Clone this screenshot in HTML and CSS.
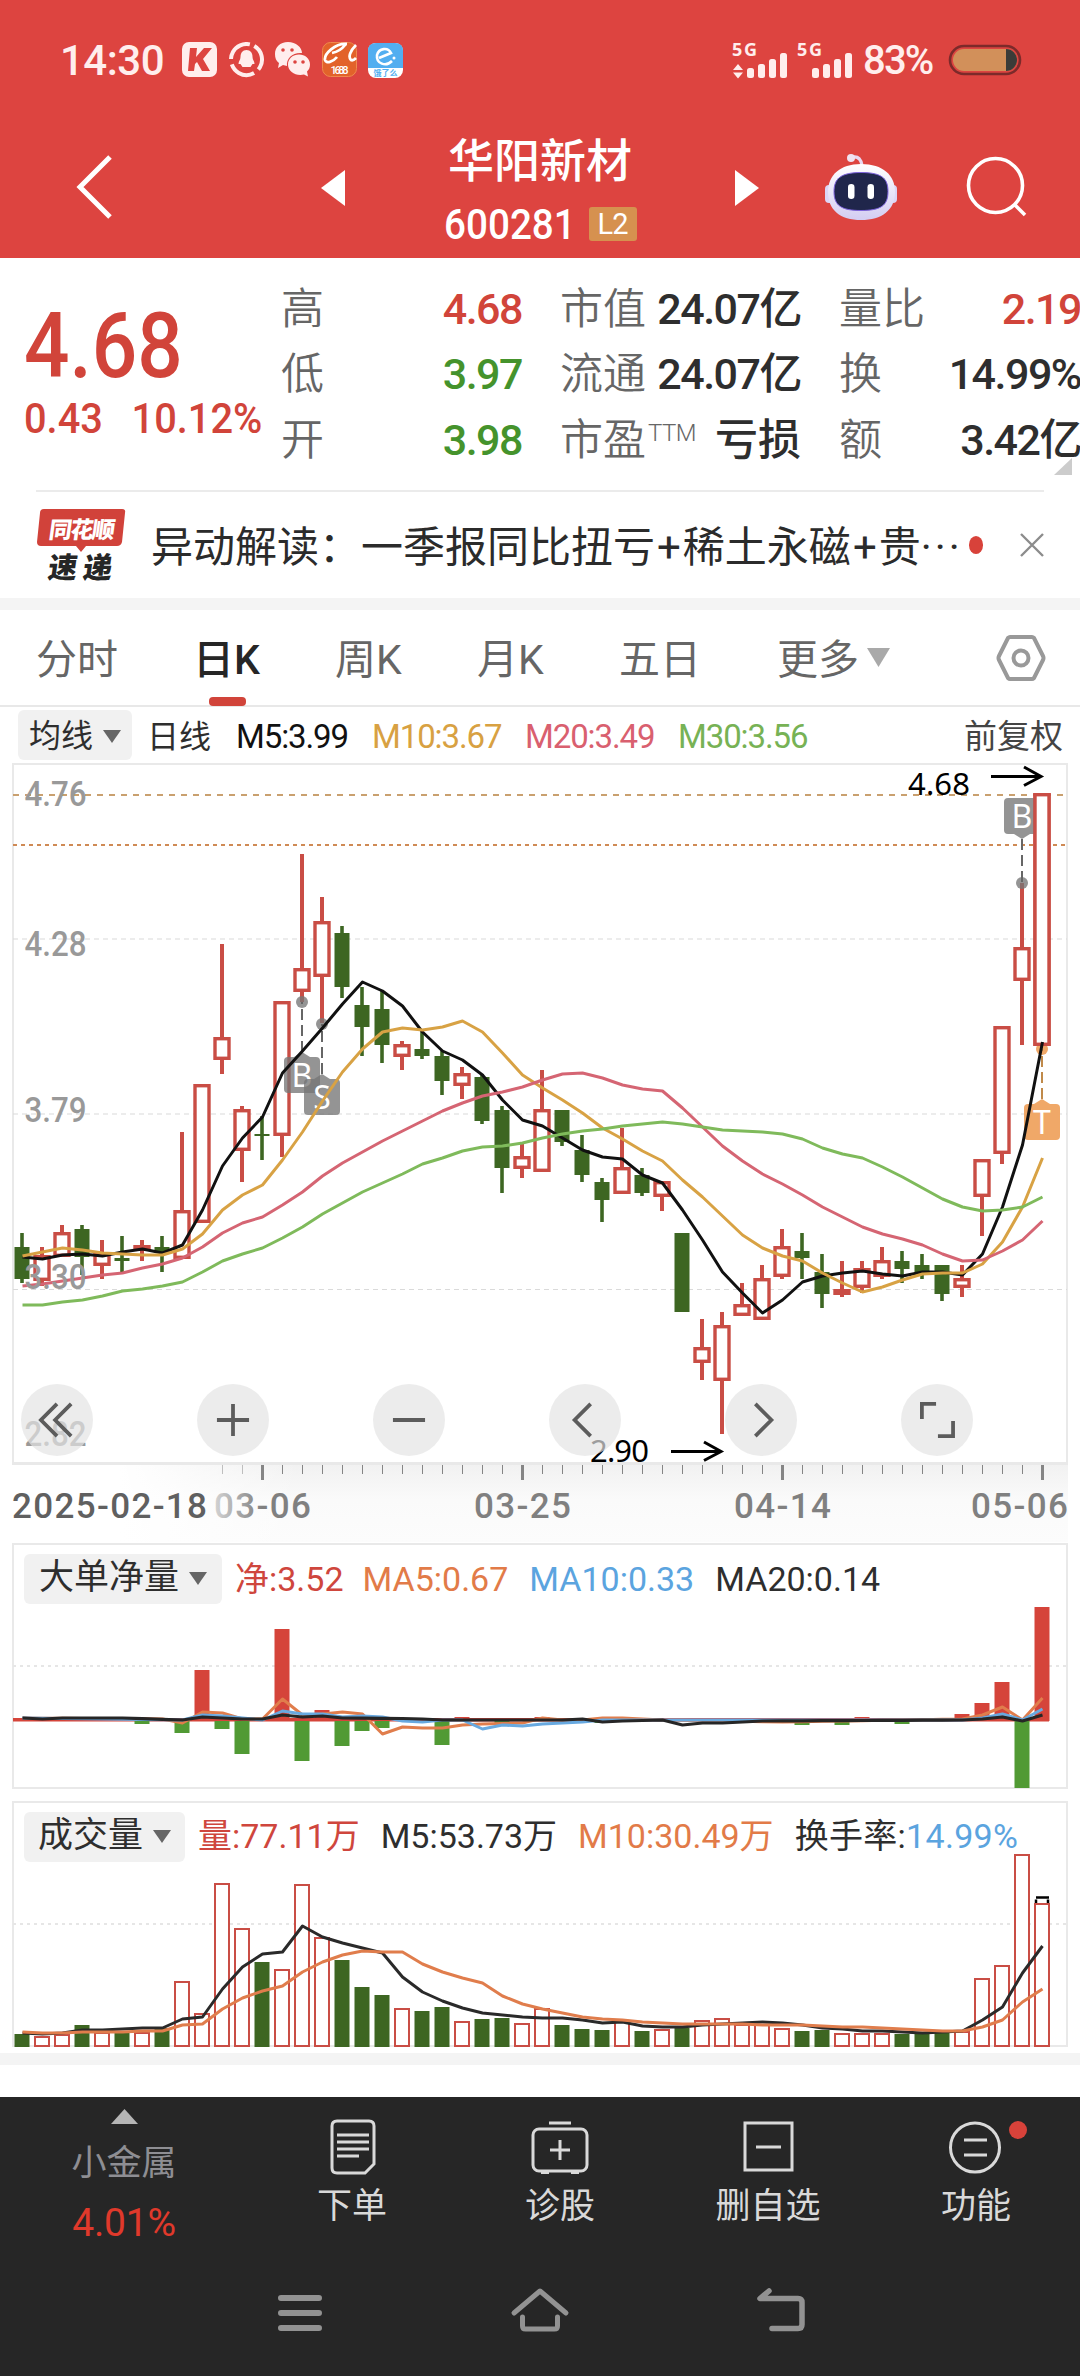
FILE: index.html
```html
<!DOCTYPE html>
<html lang="zh-CN">
<head>
<meta charset="utf-8">
<title>华阳新材 600281</title>
<link rel="stylesheet" href="styles.css">
</head>
<body>
<header class="top">
  <div class="status">
    <span class="clock">14:30</span>
    <svg class="apps" width="188" height="36" viewBox="180 42 188 36">
      <rect x="181" y="42" width="35" height="35" rx="7" fill="#ffeeed"/>
      <path d="M189 48h7l-1 9 8-9h8l-9 11 7 12h-8l-5-9-2 2-1 7h-6z" fill="#dd4440"/>
      <circle cx="245.500" cy="59.500" r="15.500" fill="none" stroke="#ffeeed" stroke-width="4" stroke-dasharray="27 5.500" transform="rotate(-60 245.500 59.500)"/>
      <path d="M245.500 50c4 0 6 3 6 7 0 3 2 4 2 7l-2 0-2 3h-8l-2-3-2 0c0-3 2-4 2-7 0-4 2-7 6-7z" fill="#ffeeed"/>
      <path d="M287 42c8 0 14 5.500 14 11-9-1-16 5-15 13l-4-1-5 3 1-5c-3-2-4-5-4-9 0-7 5-12 13-12z" fill="#ffeeed"/>
      <path d="M298 54.500c6 0 11 4 11 10 0 3-1 5-3 7l1 5-4-2c-8 2-16-3-16-10 0-6 5-10 11-10z" fill="#ffeeed"/>
      <g fill="#dd4440"><circle cx="282" cy="50" r="1.800"/><circle cx="291" cy="50" r="1.800"/><circle cx="294" cy="62" r="1.800"/><circle cx="302" cy="62" r="1.800"/></g>
      <rect x="321.500" y="42.500" width="34" height="34" rx="8" fill="#e2622a" stroke="#ef8a4e"/>
      <path d="M346 44c-12-1-23 10-22 16 1 4 8 2 12-3M331 53c5-1 10-4 13-8M355 45c-6 6-8 12-5 15q2 1 5-2" fill="none" stroke="#fff" stroke-width="2.800"/>
      <text class="tiny" x="338.500" y="74" textLength="18" text-anchor="middle" fill="#fff">1688</text>
    </svg>
    <svg class="ele" width="35" height="35" viewBox="368 42 35 35">
      <rect x="368" y="42" width="35" height="35" rx="8" fill="#fff"/>
      <path d="M368 67V50q0-8 8-8h19q8 0 8 8v17z" fill="#52aef0"/>
      <path d="M379 57l12-5c-3-6-12-5-14 2-1 9 9 12 15 6" fill="none" stroke="#fff" stroke-width="2.600"/>
      <circle cx="394" cy="57" r="1.500" fill="#fff"/>
      <text class="micro" x="385.500" y="75" text-anchor="middle" fill="#52aef0">饿了么</text>
    </svg>
    <svg class="signal" width="122" height="56" viewBox="730 32 122 56" fill="#ffeeed">
      <text class="net" x="731" y="56" textLength="25">5G</text>
      <path d="M732 70l5-6 5 6zM732 72.500l5 6 5-6z"/>
      <rect x="746" y="68" width="7" height="10" rx="2.500"/><rect x="757" y="64" width="7" height="14" rx="2.500"/><rect x="768" y="59" width="7" height="19" rx="2.500"/><rect x="779" y="53" width="7" height="25" rx="2.500"/>
      <text class="net" x="796" y="56" textLength="25">5G</text>
      <rect x="811" y="68" width="7" height="10" rx="2.500"/><rect x="822" y="64" width="7" height="14" rx="2.500"/><rect x="833" y="59" width="7" height="19" rx="2.500"/><rect x="844" y="53" width="7" height="25" rx="2.500"/>
    </svg>
    <span class="pct">83%</span>
    <svg class="battery" width="74" height="32" viewBox="947 44 74 32">
      <rect x="949" y="46" width="70" height="28" rx="14" fill="none" stroke="#7c2a2a" stroke-width="2.600"/>
      <path d="M963 49h42a11 11 0 0 1 0 22h-42a11 11 0 0 1 0-22z" fill="#d2905a"/>
      <path d="M1005 49a11 11 0 0 1 0 22z" fill="#3b3b38"/>
    </svg>
  </div>
  <div class="titlebar">
    <div class="back"><svg width="38" height="68" viewBox="0 0 38 68"><path d="M34 4L4 34l30 30" fill="none" stroke="#fff" stroke-width="5"/></svg></div>
    <svg width="24" height="36" viewBox="0 0 24 36"><path d="M24 0v36L0 18z" fill="#fff"/></svg>
    <div class="name"><div class="stock">华阳新材</div><div class="code"><span class="digits">600281</span><span class="l2">L2</span></div></div>
    <svg width="24" height="36" viewBox="0 0 24 36"><path d="M0 0v36l24-18z" fill="#fff"/></svg>
    <div class="robot">
      <svg width="72" height="68" viewBox="825 149 72 68">
        <defs><linearGradient id="shell" x1="0" y1="0" x2="0" y2="1"><stop offset="0" stop-color="#fff"/><stop offset="1" stop-color="#d3cdf2"/></linearGradient></defs>
        <path d="M853 153c6-1 8 3 9 8" fill="none" stroke="#e9d8f0" stroke-width="3"/>
        <circle cx="851" cy="154" r="4" fill="#f0e2f0"/>
        <rect x="825" y="181" width="10" height="18" rx="4" fill="#dcd6f6"/><rect x="887" y="181" width="10" height="18" rx="4" fill="#dcd6f6"/>
        <path d="M861 160c22 0 34 11 34 28 0 18-13 28-34 28s-33-10-33-28c0-17 12-28 33-28z" fill="url(#shell)"/>
        <path d="M861 168.500c21 0 27 6 27 19 0 14-7 19-27 19s-27-5-27-19c0-13 7-19 27-19z" fill="#20264b" stroke="#7d63dd" stroke-width="1"/>
        <rect x="848" y="180" width="6.500" height="15" rx="3.200" fill="#fff"/><rect x="867.500" y="180" width="6.500" height="15" rx="3.200" fill="#fff"/>
      </svg>
    </div>
    <div class="search"><svg width="62" height="62" viewBox="965 155 62 62" fill="none" stroke="#fff" stroke-width="3.600"><circle cx="994.500" cy="184.500" r="27"/><path d="M1013 203l11 11"/></svg></div>
  </div>
</header>

<section class="quote">
  <div class="price">
    <div class="last">4.68</div>
    <div class="chg"><span>0.43</span><span>10.12%</span></div>
  </div>
  <div class="stats">
    <div class="cell"><i>高</i><b class="red">4.68</b></div><div class="cell"><i>市值</i><b>24.07亿</b></div><div class="cell"><i>量比</i><b class="red">2.19</b></div>
    <div class="cell"><i>低</i><b class="green">3.97</b></div><div class="cell"><i>流通</i><b>24.07亿</b></div><div class="cell"><i>换</i><b>14.99%</b></div>
    <div class="cell"><i>开</i><b class="green">3.98</b></div><div class="cell"><i>市盈<sup>TTM</sup></i><b class="han">亏损</b></div><div class="cell"><i>额</i><b>3.42亿</b></div>
  </div>
  <span class="corner"></span>
</section>

<section class="news">
  <svg class="logo" width="88" height="74" viewBox="37 507 88 74">
    <path d="M44 508h78q4 0 3 4l-3 29q-1 4-5 4H86l-5 6-5-6H41q-4 0-4-4l3-29q0-4 4-4z" fill="#d1423a"/>
    <text class="badge1" x="0" y="0" textLength="66" transform="translate(48 537) skewX(-8)">同花顺</text>
    <text class="badge2" x="0" y="0" textLength="64" transform="translate(47 577) skewX(-8)">速递</text>
  </svg>
  <span class="headline">异动解读：一季报同比扭亏<q>+</q>稀土永磁<q>+</q>贵<em>···</em></span>
  <span class="dot"></span>
  <svg class="close" width="24" height="24" viewBox="0 0 24 24"><path d="M1 1l22 22M23 1L1 23" stroke="#8c8c8c" stroke-width="2.400"/></svg>
</section>

<nav class="tabs">
  <span>分时</span><span class="on">日K</span><span>周K</span><span>月K</span><span>五日</span><span>更多<svg class="caret" width="23" height="19" viewBox="0 0 23 19"><path d="M0 0h23L11.500 19z" fill="#a9a9a9"/></svg></span>
  <svg class="gear" width="50" height="48" viewBox="0 0 50 48" fill="none" stroke="#999" stroke-width="4"><path d="M14 3h22q1 0 2 1l9 18q1 2 0 4l-9 18q-1 1-2 1H14q-1 0-2-1L3 26q-1-2 0-4l9-18q1-1 2-1z"/><circle cx="25" cy="24" r="7.500"/></svg>
</nav>

<div class="legend">
  <span class="pick">均线<svg width="18" height="13" viewBox="0 0 18 13"><path d="M0 0h18L9 13z" fill="#666"/></svg></span>
  <span class="l-day">日线</span><span class="l5">M5:3.99</span><span class="l10">M10:3.67</span><span class="l20">M20:3.49</span><span class="l30">M30:3.56</span><span class="l-adj">前复权</span>
</div>

<div class="kline">
  <svg id="kline" width="1080" height="704" viewBox="0 760 1080 704"></svg>
  <div class="controls">
    <button><svg viewBox="0 0 36 36"><path d="M18 1L1 18l17 17M33 1L16 18l17 17"/></svg></button>
    <button><svg viewBox="0 0 36 36"><path d="M1 18h34M18 1v34"/></svg></button>
    <button><svg viewBox="0 0 36 36"><path d="M1 18h34"/></svg></button>
    <button><svg viewBox="0 0 36 36"><path d="M24 1L7 18l17 17"/></svg></button>
    <button><svg viewBox="0 0 36 36"><path d="M12 1l17 17-17 17"/></svg></button>
    <button><svg viewBox="0 0 36 36"><path d="M17 1H2v16M19 35h16V19"/></svg></button>
  </div>
</div>

<div class="axis"><svg id="axis" width="1080" height="79" viewBox="0 1464 1080 79"></svg></div>

<div class="panel net-panel">
  <div class="labels"><span class="pick">大单净量<svg width="18" height="13" viewBox="0 0 18 13"><path d="M0 0h18L9 13z" fill="#666"/></svg></span><span class="c-red">净:3.52</span><span class="c-or">MA5:0.67</span><span class="c-bl">MA10:0.33</span><span>MA20:0.14</span></div>
  <svg id="flow" width="1080" height="248" viewBox="0 1542 1080 248"></svg>
</div>
<div class="panel vol-panel">
  <div class="labels"><span class="pick">成交量<svg width="18" height="13" viewBox="0 0 18 13"><path d="M0 0h18L9 13z" fill="#666"/></svg></span><span class="c-red">量:77.11万</span><span>M5:53.73万</span><span class="c-or">M10:30.49万</span><span class="turn">换手率:<u>14.99%</u></span></div>
  <svg id="volume" width="1080" height="248" viewBox="0 1801 1080 248"></svg>
</div>
<div class="band"></div>

<footer>
  <div class="actions">
    <div class="sector"><svg width="27" height="15" viewBox="0 0 27 15"><path d="M13.500 0L27 15H0z" fill="#b5b5b5"/></svg><span>小金属</span><strong>4.01%</strong></div>
    <div class="act"><svg viewBox="-4 0 60 60"><path d="M11 3h32q5 0 5 5v38l-9 9H11q-5 0-5-5V8q0-5 5-5zM11 17h32M11 24h32M11 31h32M11 38h22"/></svg><span>下单</span></div>
    <div class="act"><svg viewBox="0 0 60 60"><rect x="3" y="11" width="54" height="42" rx="6"/><path d="M19 5h22M30 22v20M20 32h20M11 54.500h8M41 54.500h8"/></svg><span>诊股</span></div>
    <div class="act"><svg viewBox="0 0 60 60"><path d="M7 5h47v47H7zM18 29h25"/></svg><span>删自选</span></div>
    <div class="act"><svg viewBox="0 0 60 60"><circle cx="29" cy="29.500" r="24.500"/><path d="M18 22h23M18 37h23"/></svg><span>功能</span><em></em></div>
  </div>
  <div class="sysnav">
    <svg viewBox="0 0 60 50"><path d="M11 11h38M11 26h38M11 41h38"/></svg>
    <svg viewBox="0 0 60 50"><path d="M4 26L30 4l26 22M12.500 30v9q0 3 3 3h29q3 0 3-3v-9" stroke-width="5"/></svg>
    <svg viewBox="0 0 60 50"><path d="M19 4L10 11.500h38q4 0 4 4v22q0 4-4 4H22" stroke-width="5.500"/></svg>
  </div>
</footer>
<script src="script.js"></script>
</body>
</html>
```
FILE: styles.css
```css
* { box-sizing: border-box; }
body { margin: 0; width: 1080px; background: #fff; color: #2e2e2e; font-family: Roboto, "Noto Sans CJK SC", sans-serif; overflow-x: hidden; }
svg { display: block; flex: none; }
i, em { font-style: normal; }
u { text-decoration: none; }

.top { height: 258px; background: #dd4440; color: #fff; }
.status { height: 120px; display: flex; align-items: center; padding-left: 60px; color: #ffeeed; }
.clock { width: 121px; font-size: 42px; font-weight: 500; letter-spacing: -0.5px; }
.ele { margin-left: -1px; }
.signal { margin-left: 328px; }
.pct { width: 84px; margin-left: 10px; font-size: 40px; font-weight: 500; letter-spacing: -1.8px; }
.battery { margin-left: 1px; }
.tiny { font: 500 11px Roboto, sans-serif; }
.micro { font: 700 8px "Noto Sans CJK SC", sans-serif; }
.net { font: 700 18px "Noto Sans", sans-serif; }
.titlebar { display: grid; grid-template-columns: 321px 24px 390px 24px 150px 171px; height: 138px; align-items: center; padding-bottom: 8px; }
.back { padding-left: 76px; }
.titlebar > svg { margin-top: 2px; }
.name { text-align: center; margin-top: 8px; }
.stock { font-size: 46px; line-height: 66px; font-weight: 500; }
.code { display: flex; justify-content: center; align-items: center; height: 60px; font-size: 42px; font-weight: 500; }
.digits { width: 145px; transform: scaleX(.92); transform-origin: 0 50%; text-align: left; }
.l2 { width: 48px; height: 34px; line-height: 35px; border-radius: 3px; background: #d6914f; font-size: 29px; font-weight: 400; letter-spacing: -1px; }
.robot { padding-left: 66px; }
.search { padding-left: 57px; }

.quote { position: relative; display: grid; grid-template-columns: 281px 799px; height: 232px; }
.price { padding: 43px 0 0 24px; color: #d1443a; white-space: nowrap; }
.last { width: 180px; font-size: 90px; line-height: 92px; font-weight: 500; transform: scaleX(.89); transform-origin: 0 50%; }
.chg { display: flex; width: 281px; gap: 31px; font-size: 43px; font-weight: 500; line-height: 52px; margin-top: -1px; transform: scaleX(.925); transform-origin: 0 50%; }
.stats { display: grid; grid-template-columns: 240px 240px 241px; column-gap: 39px; grid-auto-rows: 65.5px; padding-top: 18px; }
.cell { display: flex; justify-content: space-between; align-items: center; font-size: 43px; line-height: 64px; white-space: nowrap; }
.cell i { color: #666; font-weight: 350; font-size: 43px; }
.cell b { font-weight: 500; letter-spacing: -1.5px; margin-right: -1px; }
.cell .han { letter-spacing: 0; }
.cell sup { font-size: 24px; line-height: 0; vertical-align: 14px; margin-left: 2px; letter-spacing: -0.5px; }
.red { color: #d1443a; }
.green { color: #45932c; }
.corner { position: absolute; right: 8px; bottom: 15px; border-style: solid; border-width: 0 0 17px 18px; border-color: transparent transparent #ccc transparent; }

.news { display: flex; align-items: center; height: 108px; margin: 0 36px; border-top: 2px solid #ebebeb; }
.logo { margin-left: 1px; overflow: visible; }
.badge1 { font: 900 23px "Noto Sans CJK SC", sans-serif; fill: #fff; }
.badge2 { font: 900 29px "Noto Sans CJK SC", sans-serif; fill: #262626; }
.headline { width: 812px; margin-left: 26px; margin-top: -4px; font-size: 42px; white-space: nowrap; color: #2b2b2b; }
.headline q { quotes: none; padding: 0 2px; }
.headline em { letter-spacing: 3px; }
.dot { width: 18px; height: 18px; border-radius: 50%; background: #d8423a; margin-left: 6px; }
.close { margin-left: 37px; }

.tabs { display: flex; align-items: center; height: 109px; border-top: 12px solid #f4f4f4; border-bottom: 2px solid #e8e8e8; padding: 0 36px; color: #666; font-size: 41px; }
.tabs span { position: relative; width: 142px; padding-top: 4px; line-height: 90px; display: flex; align-items: center; white-space: nowrap; }
.tabs span:nth-child(1) { width: 157px; }
.tabs span:nth-child(5) { width: 158px; }
.tabs .on { color: #262626; font-weight: 500; width: 142px; }
.tabs .on::after { content: ""; position: absolute; left: 16px; bottom: -1px; width: 37px; height: 9px; border-radius: 4px; background: #d1443a; }
.caret { margin-left: 8px; margin-top: -5px; }
.tabs .gear { margin-left: auto; margin-right: -2px; }

.legend { display: flex; align-items: center; height: 53px; padding: 3px 0 0 18px; font-size: 33px; line-height: 46px; letter-spacing: -1.1px; white-space: nowrap; }
.legend > span + span { padding-top: 4px; }
.pick { display: flex; align-items: center; justify-content: center; gap: 10px; height: 50px; border-radius: 6px; background: #f1f1f1; letter-spacing: 0; }
.legend .pick { width: 114px; font-size: 32px; padding-top: 2px; }
.l-day { width: 89px; margin-left: 15px; font-size: 32px; letter-spacing: 0; }
.l5 { width: 136px; color: #111; }
.l10 { width: 153px; color: #d8a142; }
.l20 { width: 153px; color: #d9606f; }
.l30 { color: #77b255; }
.l-adj { margin-left: auto; margin-right: 17px; font-size: 33px; letter-spacing: 0; color: #444; }

.kline { position: relative; height: 704px; }
.controls { position: absolute; left: 21px; top: 624px; display: flex; gap: 104px; }
.controls button { width: 72px; height: 72px; padding: 19px; border: 0; border-radius: 50%; background: rgba(227, 227, 227, .69); }
.controls svg { width: 34px; height: 34px; overflow: visible; fill: none; stroke: #5c5c5c; stroke-width: 4; }
.axis { height: 79px; background: linear-gradient(#f1f1f1, #fafafa 45%, #fcfcfc); }

.panel { position: relative; height: 248px; margin-top: -1px; background: #fff; }
.vol-panel { margin-top: 11px; }
.panel .labels { position: absolute; left: 24px; top: 12px; display: flex; align-items: center; font-size: 34px; line-height: 46px; white-space: nowrap; }
.vol-panel .labels { letter-spacing: 0; top: 11px; }
.panel .pick { width: 198px; height: 50px; font-size: 35px; margin-right: 13px; padding-bottom: 2px; letter-spacing: 0; }
.vol-panel .pick { width: 161px; }
.labels > span + span { margin-right: 21px; padding-bottom: 1px; }
.net-panel .c-red { margin-right: 19px; }
.vol-panel .labels > span + span { margin-right: 21px; padding-bottom: 2px; }
.vol-panel .labels .turn { letter-spacing: .3px; }
.c-red { color: #cf463d; }
.c-or { color: #e27b48; }
.c-bl { color: #5ba4df; }
.labels u { color: #5ba4df; }
.band { height: 12px; margin-top: 4px; background: #f4f4f4; }

footer { height: 279px; margin-top: 32px; background: #262626; color: #d9d9d9; }
.actions { display: grid; grid-template-columns: 248px 208px 208px 208px 208px; height: 160px; }
.sector { display: flex; flex-direction: column; align-items: center; padding-top: 12px; color: #8e8e93; font-size: 35px; }
.sector span { line-height: 50px; margin-top: 15px; }
.sector strong { color: #e0392b; font-weight: 400; font-size: 39px; line-height: 50px; margin-top: 9px; letter-spacing: -0.2px; }
.act { position: relative; display: flex; flex-direction: column; align-items: center; padding-top: 21px; font-size: 35px; }
.act span { line-height: 50px; margin-top: 4px; }
.act svg { width: 60px; height: 60px; fill: none; stroke: #d9d9d9; stroke-width: 3; }
.act em { position: absolute; left: 137px; top: 24px; width: 18px; height: 18px; border-radius: 50%; background: #d8423a; }
.sysnav { display: flex; justify-content: center; gap: 180px; padding-top: 30px; }
.sysnav svg { width: 60px; height: 50px; fill: none; stroke: #929292; stroke-width: 6; stroke-linecap: round; stroke-linejoin: round; }

.frame { fill: none; stroke: #e9e9e9; stroke-width: 2; }
.grid { stroke: #dadada; stroke-width: 1.2; stroke-dasharray: 5 4; }
.dots { stroke: #e6e6e6; stroke-width: 2; stroke-dasharray: 3 4; }
.high { stroke: #c9a06f; stroke-width: 2; stroke-dasharray: 6 6; }
.limit { stroke: #cf8a55; stroke-width: 2; stroke-dasharray: 4 4; }
.up { fill: #fff; stroke: #c94d45; stroke-width: 3.4; }
.upw { stroke: #c94d45; stroke-width: 4; }
.down { fill: #3d6622; }
.downw { stroke: #3d6622; stroke-width: 3.6; }
.ma { fill: none; stroke-linejoin: round; }
.scale { font: 500 35px Roboto, sans-serif; fill: #999; }
.date { font: 500 35px Roboto, sans-serif; fill: #808080; }
.note { font: 400 31px "Noto Sans", sans-serif; fill: #000; }
.arrow { fill: none; stroke: #000; stroke-width: 3; }
.tag { font: 400 32px "Noto Sans", sans-serif; fill: #fff; text-anchor: middle; }
#kline { overflow: visible; }
```
FILE: script.js
```js
const X = i => 22 + 20 * i;
const line = (cls, x1, y1, x2, y2) => `<line class="${cls}" x1="${x1}" y1="${y1}" x2="${x2}" y2="${y2}"/>`;
const path = (ys, color, w = 3) =>
  `<polyline class="ma" stroke="${color}" stroke-width="${w}" points="${ys.map((y, i) => X(i) + 0.5 + ',' + y).join(' ')}"/>`;

// high, body top, body bottom, low, direction (1 = up, 0 = down)
const candles = [
  [1233,1247,1279,1283,0],[1247,1255,1281,1286,1],[1225,1232,1257,1257,1],[1225,1229,1257,1275,0],[1240,1253,1266,1279,1],
  [1236,1258,1261,1272,0],[1240,1245,1251,1261,1],[1236,1247,1252,1272,0],[1132,1210,1259,1259,1],[1084,1084,1223,1223,1],
  [944,1037,1060,1074,1],[1106,1109,1151,1182,1],[1116,1134,1136,1160,0],[1001,1001,1136,1157,1],[854,968,992,1002,1],
  [897,921,977,1023,1],[926,933,987,998,0],[987,1005,1027,1056,0],[991,1009,1045,1063,0],[1041,1044,1057,1070,1],
  [1032,1049,1056,1059,0],[1051,1056,1081,1095,0],[1067,1073,1086,1099,1],[1074,1077,1121,1124,0],[1106,1110,1168,1193,0],
  [1144,1156,1169,1178,1],[1070,1109,1172,1172,1],[1110,1110,1142,1146,0],[1135,1150,1175,1182,0],[1178,1182,1200,1222,0],
  [1128,1167,1194,1194,1],[1168,1175,1193,1196,0],[1181,1181,1197,1211,1],[1233,1233,1312,1312,0],[1319,1347,1363,1380,1],
  [1312,1325,1381,1434,1],[1283,1304,1316,1316,1],[1265,1278,1320,1320,1],[1229,1246,1277,1279,1],[1233,1251,1258,1279,0],
  [1254,1272,1294,1308,0],[1261,1289,1295,1297,1],[1261,1268,1288,1293,1],[1247,1260,1277,1279,1],[1251,1261,1269,1283,0],
  [1254,1265,1273,1279,0],[1265,1265,1294,1301,0],[1265,1278,1288,1297,1],[1159,1159,1197,1236,1],[1026,1026,1154,1164,1],
  [883,947,981,1045,1],[793,793,1046,1046,1]
];
const m5 = [1257,1259,1255,1254,1256,1252,1249,1253,1245,1210,1166,1138,1117,1073,1051,1028,1004,982,991,1006,1032,1051,1060,1075,1100,1120,1126,1138,1150,1157,1159,1175,1183,1210,1240,1272,1293,1313,1300,1282,1276,1273,1271,1274,1276,1272,1272,1275,1254,1207,1145,1042];
const m10 = [1256,1252,1248,1250,1253,1254,1255,1255,1249,1234,1210,1195,1185,1160,1132,1101,1072,1049,1032,1028,1030,1027,1021,1032,1053,1075,1088,1100,1113,1128,1139,1151,1161,1180,1197,1216,1235,1248,1256,1261,1273,1283,1292,1287,1280,1274,1273,1273,1264,1242,1207,1158];
const m20 = [1286,1284,1281,1278,1275,1273,1268,1264,1258,1247,1233,1223,1217,1205,1192,1176,1163,1152,1141,1131,1121,1111,1103,1096,1092,1087,1080,1074,1073,1078,1085,1089,1091,1108,1127,1146,1161,1174,1184,1195,1207,1217,1227,1234,1239,1245,1254,1261,1260,1251,1240,1221];
const m30 = [1305,1305,1302,1300,1296,1291,1289,1286,1282,1272,1261,1254,1248,1238,1227,1214,1203,1192,1183,1174,1164,1158,1151,1147,1146,1143,1138,1134,1131,1129,1126,1124,1122,1124,1127,1130,1131,1132,1134,1139,1148,1154,1158,1167,1177,1188,1199,1207,1211,1210,1207,1197];

const candle = ([h, t, b, l, up], i) => {
  const x = X(i);
  let s = line(up ? 'upw' : 'downw', x, h, x, t + 1) + line(up ? 'upw' : 'downw', x, b - 1, x, l);
  s += up ? `<rect class="up" x="${x - 7}" y="${t + 1.7}" width="14" height="${Math.max(b - t - 3.4, 1)}"/>`
          : `<rect class="down" x="${x - 7.5}" y="${t}" width="15" height="${b - t}"/>`;
  return s;
};
// trade marker: box centre, pointer direction, anchor dot
const tag = (ch, x, y, dir, dotY, color, dash) => {
  const edge = y + dir * 18, tip = y + dir * 23;
  return `<g fill="${color}"><rect x="${x - 18}" y="${y - 18}" width="36" height="36" rx="4"/>
    <path d="M${x - 8} ${edge}L${x} ${tip}L${x + 8} ${edge}z"/><circle cx="${x}" cy="${dotY}" r="6"/></g>
    <line x1="${x}" y1="${tip}" x2="${x}" y2="${dotY}" stroke="${dash}" stroke-width="2" stroke-dasharray="11 5"/>
    <text class="tag" x="${x}" y="${y + 12}">${ch}</text>`;
};
const label = (t, y) => `<text class="scale" x="24.500" y="${y}" textLength="62" lengthAdjust="spacingAndGlyphs">${t}</text>`;
const gray = 'rgba(118,118,118,.78)';
document.getElementById('kline').innerHTML =
  '<rect class="frame" x="13" y="764" width="1054" height="699"/>' +
  line('grid', 13, 939, 1067, 939) + line('grid', 13, 1114, 1067, 1114) + line('grid', 13, 1289.5, 1067, 1289.5) +
  line('high', 13, 795, 1067, 795) + line('limit', 13, 845, 1067, 845) +
  candles.map(candle).join('') +
  tag('B', 302, 1075, -1, 1002, gray, '#666') + tag('S', 322, 1097, -1, 1024, gray, '#666') +
  tag('B', 1022, 816, 1, 883, gray, '#666') + tag('T', 1042, 1122, -1, 1049, '#f0a868', '#c08a4a') +
  candle(candles[51], 51) +
  path(m5, '#111') + path(m10, '#d8a244') + path(m20, '#d56573') + path(m30, '#7fba5b') +
  label('4.76', 806) + label('4.28', 956) + label('3.79', 1122) + label('3.30', 1289) + label('2.82', 1446) +
  '<text class="note" x="908" y="795" textLength="62">4.68</text><path class="arrow" d="M991 776.500h50M1024 767l17 9.500-17 9"/>' +
  '<text class="note" x="590" y="1462" textLength="59">2.90</text><path class="arrow" d="M671 1451.500h50M704 1442l17 9.500-17 9"/>';

const date = (t, x, w, extra = '') => `<text class="date" x="${x}" y="1518" textLength="${w}" ${extra}>${t}</text>`;
let axis = `<defs>
  <linearGradient id="fade" gradientUnits="userSpaceOnUse" x1="205" y1="0" x2="262" y2="0"><stop offset="0" stop-color="#808080" stop-opacity=".2"/><stop offset="1" stop-color="#808080"/></linearGradient>
  <linearGradient id="veil" gradientUnits="userSpaceOnUse" x1="0" y1="0" x2="300" y2="0"><stop offset="0" stop-color="#fff"/><stop offset=".4" stop-color="#fff"/><stop offset="1" stop-color="#fff" stop-opacity="0"/></linearGradient>
</defs>
<rect x="0" y="1464" width="300" height="79" fill="url(#veil)"/><rect x="1068" y="1464" width="12" height="79" fill="#fff"/>
<rect class="frame" x="13" y="1400" width="1054" height="64"/>`;
for (let i = 10; i < 52; i++) {
  const major = (i - 12) % 13 === 0;
  axis += `<rect x="${X(i) + (major ? -1 : 0)}" y="1465" width="${major ? 3 : 1}" height="${major ? 15 : 9}" fill="#858585"${i < 12 ? ' opacity=".5"' : ''}/>`;
}
axis += date('2025-02-18', 12, 195, 'style="fill:#606060"') + date('03-06', 214, 97, 'style="fill:url(#fade)"') +
  date('03-25', 474, 97) + date('04-14', 734, 97) + date('05-06', 971, 97);
document.getElementById('axis').innerHTML = axis;

const bars = {9:1670,13:1629,15:1710,22:1717,26:1717,42:1717,47:1714,48:1703,49:1682,51:1607,6:1724,8:1733,10:1729,11:1754,14:1761,16:1746,17:1731,18:1728,21:1745,24:1723,29:1723,39:1725,41:1725,44:1724,50:1788};
// expands sparse {index: y} points to one value per trading day
const fill = pts => {
  const keys = Object.keys(pts).map(Number);
  return candles.map((_, i) => {
    const a = keys.filter(n => n <= i).pop(), b = keys.find(n => n >= i);
    return a === b ? pts[a] : pts[a] + (pts[b] - pts[a]) * (i - a) / (b - a);
  });
};
const f5 = fill({0:1718,7:1719,8:1723,9:1712,10:1713,11:1719,12:1719,13:1699,14:1715,15:1714,16:1712,17:1714,18:1734,19:1727,20:1728,21:1728,22:1725,23:1724,24:1723.5,25:1723,26:1718,27:1720,28:1720,29:1718,30:1718,31:1719,32:1720,38:1722,47:1719,48:1715,49:1707,50:1720,51:1698});
const f10 = fill({0:1718,8:1720,9:1715,10:1716,12:1720,13:1711,14:1714,15:1714,16:1717,17:1716,18:1717,19:1721,20:1722,21:1720,22:1720,23:1729,24:1725,25:1726,26:1724,27:1723,28:1722,29:1720,47:1720,48:1718,49:1714,50:1720,51:1709});
const f20 = fill({0:1718,1:1719,2:1718,5:1718,8:1720,9:1717,10:1718,11:1719,12:1719,13:1715,14:1717,15:1716,16:1718,19:1718.5,20:1719,21:1720,27:1720,28:1719,29:1722,30:1721,31:1720.5,32:1720,33:1725,34:1723,35:1723,36:1722,37:1721,47:1720,48:1719,49:1717,50:1721,51:1715});
document.getElementById('flow').innerHTML =
  '<rect class="frame" x="13" y="1544" width="1054" height="244"/>' + line('dots', 13, 1666, 1067, 1666) +
  '<rect x="13" y="1718" width="1036" height="3.500" fill="#d5443a"/>' +
  Object.entries(bars).map(([i, y]) => `<rect x="${X(+i) - 7.5}" y="${Math.min(y, 1721)}" width="15" height="${Math.abs(y - 1721)}" fill="${y < 1721 ? '#d5443a' : '#519a34'}"/>`).join('') +
  path(f5, '#e07d4c') + path(f10, '#68a9e0') + path(f20, '#262626', 3.2);

// positive: falling day, negative: rising day; magnitude is the bar's top edge
const vol = [2034,-2036,-2034,2025,-2032,2031,-2032,2028,-1981,-2013,-1883,-1928,1962,-1969,-1884,-1937,1960,1987,1995,-2008,2011,2007,-2021,2019,2018,-2023,-2008,2025,2029,2030,-2020,2031,-2029,2028,-2020,-2018,-2024,-2024,-2028,2031,2030,-2033,-2033,-2033,2034,2033,2033,-2031,-1978,-1965,-1854,-1903];
const v5 = [2033,2034,2033,2030,2030,2029,2028,2028,2019,2017,1989,1967,1954,1952,1926,1937,1943,1948,1953,1977,1992,2001,2008,2013,2015,2017,2018,2018,2020,2023,2022,2026,2027,2027,2025,2024,2023,2022,2023,2025,2028,2029,2031,2031,2032,2033,2032,2031,2020,2007,1973,1946];
const v10 = [2032,2033,2033,2032,2032,2032,2031,2031,2025,2024,2009,1998,1991,1986,1972,1962,1955,1951,1952,1952,1964,1972,1978,1983,1996,2004,2009,2013,2017,2019,2020,2022,2023,2024,2024,2024,2024,2025,2025,2025,2026,2027,2027,2028,2029,2030,2031,2031,2027,2020,2002,1989];
document.getElementById('volume').innerHTML =
  '<rect class="frame" x="13" y="1802" width="1054" height="244"/>' + line('dots', 13, 1924, 1067, 1924) +
  '<path d="M1036 1897.500h13M1036 1899.500v4M1048 1899.500v4" fill="none" stroke="#000" stroke-width="2.500"/>' +
  vol.map((v, i) => v > 0
    ? `<rect class="down" x="${X(i) - 7.5}" y="${v}" width="15" height="${2047 - v}"/>`
    : `<rect class="up" style="stroke-width:2px" x="${X(i) - 7}" y="${1 - v}" width="14" height="${2045 + v}"/>`).join('') +
  path(v5, '#2a2a2a') + path(v10, '#e07d4c');
```
